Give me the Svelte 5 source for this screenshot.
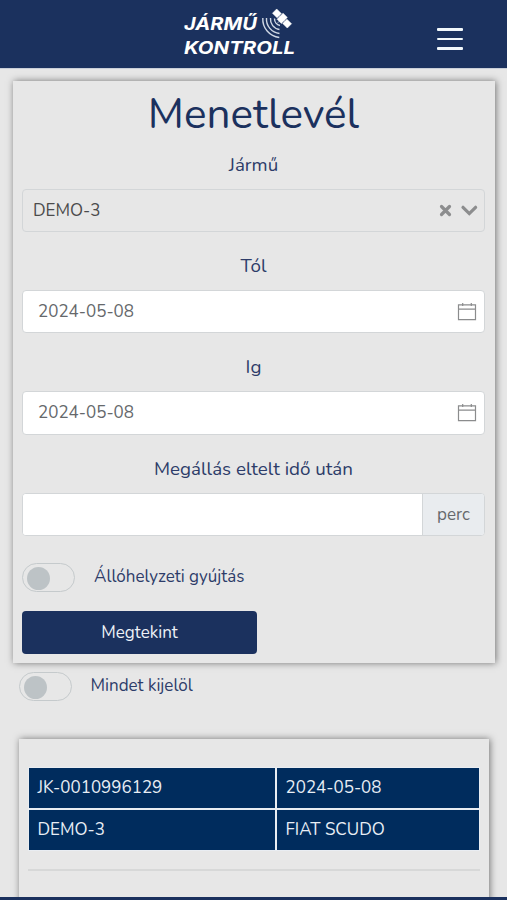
<script>
  let vehicle = $state("DEMO-3");
  let from = $state("2024-05-08");
  let to = $state("2024-05-08");
  let minutes = $state("");
  let ignition = $state(false);
  let selectAll = $state(false);

  const rows = [
    ["JK-0010996129", "2024-05-08"],
    ["DEMO-3", "FIAT SCUDO"],
  ];
</script>

{#snippet calendar()}
  <svg class="calendar" width="20" height="20" viewBox="0 0 20 20">
    <path d="M1.5 2.8h17v14.9h-17zM1.5 7.2h17M5.7 0.9v3M14.3 0.9v3" />
  </svg>
{/snippet}

<div class="page">
  <header>
    <svg class="logo" width="114" height="50" viewBox="0 0 114 50">
      <g class="logo-text">
        <text x="1" y="23" textLength="73" lengthAdjust="spacingAndGlyphs">JÁRMŰ</text>
        <text x="1" y="46.5" textLength="111" lengthAdjust="spacingAndGlyphs">KONTROLL</text>
      </g>
      <g class="waves">
        <path d="M91.5 11.5a7 7 0 0 0 5.5 7" />
        <path d="M87.5 11a10.5 10.5 0 0 0 9 11.5" />
        <path d="M83.5 11a14.5 14.5 0 0 0 13 15.5" />
        <path d="M79.8 11a18.5 18.5 0 0 0 16.5 19.5" />
      </g>
      <g class="satellite" transform="translate(99 11.5) rotate(45)">
        <rect x="-10.5" y="-3" width="6.5" height="6" />
        <rect x="-3" y="-4.5" width="6" height="8.5" />
        <rect x="4" y="-3" width="6.5" height="6" />
        <path d="M-5 0h10M0 3v4" />
      </g>
    </svg>
    <button class="menu" aria-label="Menü">
      <span></span>
      <span></span>
      <span></span>
    </button>
  </header>

  <main>
    <section class="card form">
      <h1>Menetlevél</h1>

      <div class="label vehicle-label">Jármű</div>
      <div class="field select">
        <span class="value">{vehicle}</span>
        <svg class="select-icons" width="40" height="14" viewBox="0 0 40 14">
          <path d="M2.5 3.5l8 8M10.5 3.5l-8 8" />
          <path d="M24 4.3l6.300 6.300l6.300-6.300" />
        </svg>
      </div>

      <div class="label">Tól</div>
      <div class="field date">
        <span class="value">{from}</span>
        {@render calendar()}
      </div>

      <div class="label">Ig</div>
      <div class="field date">
        <span class="value">{to}</span>
        {@render calendar()}
      </div>

      <div class="label">Megállás eltelt idő után</div>
      <div class="field group">
        <input type="text" bind:value={minutes} aria-label="Megállás eltelt idő után" />
        <span class="unit">perc</span>
      </div>

      <label class="switch">
        <input type="checkbox" bind:checked={ignition} />
        <span class="track"></span>
        <span class="switch-text">Állóhelyzeti gyújtás</span>
      </label>

      <button class="submit">Megtekint</button>
    </section>

    <label class="switch all">
      <input type="checkbox" bind:checked={selectAll} />
      <span class="track"></span>
      <span class="switch-text">Mindet kijelöl</span>
    </label>

    <section class="card result">
      <div class="table">
        {#each rows as row}
          {#each row as cell}
            <div class="cell">{cell}</div>
          {/each}
        {/each}
      </div>
      <hr />
    </section>
  </main>

  <footer></footer>
</div>

<style>
  :global(body) {
    margin: 0;
    background: #e7e7e7;
  }

  .page {
    display: flex;
    flex-direction: column;
    height: 900px;
    overflow: hidden;
    font-family: Nunito, Lato, "Open Sans", sans-serif;
    font-size: 17px;
    color: #2d3c69;
  }

  header {
    display: flex;
    flex: none;
    height: 68px;
    justify-content: flex-end;
    align-items: center;
    background: #1b315e;
    border-bottom: 1px solid #c9ced8;
  }

  .logo {
    margin: 0 140px 4px 0;
  }

  .logo-text {
    fill: #fff;
    font-family: Inter, "Liberation Sans", sans-serif;
    font-size: 17.5px;
    font-weight: 700;
    font-style: italic;
  }

  .waves path {
    fill: none;
    stroke: #cfd7e4;
    stroke-width: 1.4;
  }

  .satellite {
    fill: #fff;
    stroke: #fff;
    stroke-width: 0.5;
  }

  .menu {
    display: flex;
    flex-direction: column;
    gap: 7px;
    width: 26px;
    margin: 10px 44px 0 0;
    padding: 0;
    border: 0;
    background: none;
  }

  .menu span {
    height: 2.4px;
    border-radius: 1px;
    background: #f2f8fb;
  }

  main {
    flex: 1;
    min-height: 0;
    overflow: hidden;
    padding: 12px 12px 0 13px;
  }

  .card {
    background: #e7e7e7;
    box-shadow: 1px 0 7px 0 rgba(0, 0, 0, 0.5);
  }

  .form {
    height: 582px;
    padding: 0 10px 0 9px;
    box-sizing: border-box;
  }

  h1 {
    height: 66px;
    margin: 0;
    font-size: 42.3px;
    font-weight: 400;
    line-height: 67px;
    text-align: center;
    color: #1b315e;
  }

  .label {
    height: 58px;
    padding-top: 8px;
    box-sizing: border-box;
    font-size: 18.8px;
    line-height: 53px;
    text-align: center;
  }

  .vehicle-label {
    height: 42px;
    padding: 0;
    line-height: 36px;
  }

  .field {
    display: flex;
    align-items: center;
    height: 43.2px;
    box-sizing: border-box;
    border: 1px solid #d3d6d8;
    border-radius: 4px;
    background: #fff;
    color: #65686b;
  }

  .select {
    justify-content: space-between;
    padding: 0 5px 1px 10px;
    background: #e7e7e7;
    color: #4b4b4c;
  }

  .select-icons {
    fill: none;
    stroke: #8c8d8e;
    stroke-width: 3.2;
    stroke-linecap: round;
  }

  .date {
    justify-content: space-between;
    padding: 0 7px 0 15px;
  }

  .calendar {
    fill: none;
    stroke: #8b8c8d;
    stroke-width: 1.2;
  }

  .group {
    align-items: stretch;
    overflow: hidden;
  }

  .group input {
    flex: 1;
    min-width: 0;
    padding: 0 15px;
    border: 0;
    font: inherit;
  }

  .unit {
    display: flex;
    align-items: center;
    justify-content: center;
    width: 61px;
    border-left: 1px solid #d3d6d8;
    background: #e9ecef;
  }

  .switch {
    display: flex;
    align-items: center;
    height: 29px;
    margin-top: 27.4px;
  }

  .switch input {
    position: absolute;
    opacity: 0;
  }

  .track {
    display: flex;
    align-items: center;
    width: 53px;
    height: 29px;
    padding: 1px 0 0 4px;
    box-sizing: border-box;
    border: 1px solid #c5cacc;
    border-radius: 15px;
  }

  .track::before {
    content: "";
    width: 23px;
    height: 23px;
    border-radius: 50%;
    background: #bdc3c6;
  }

  .switch input:checked + .track {
    justify-content: flex-end;
    padding: 1px 4px 0 0;
  }

  .switch-text {
    margin-left: 19px;
    padding-bottom: 3px;
  }

  .submit {
    display: block;
    width: 235px;
    height: 43px;
    margin-top: 19px;
    padding: 0;
    border: 0;
    border-radius: 4px;
    background: #1b315e;
    color: #edf1f7;
    font: inherit;
  }

  .all {
    margin: 9px 0 0 5.5px;
  }

  .result {
    height: 180px;
    margin: 38px 6px 0;
    padding: 28px 9px 0;
    box-sizing: border-box;
  }

  .table {
    display: grid;
    grid-template-columns: 246px 1fr;
    grid-auto-rows: 40px;
    gap: 2px;
    padding: 1px;
    background: #e9edf2;
  }

  .cell {
    padding-left: 8.5px;
    background: #002c5d;
    color: #e8eef5;
    line-height: 40px;
  }

  hr {
    height: 2px;
    margin: 18px 0 0;
    border: 0;
    background: #d7d8d8;
  }

  footer {
    flex: none;
    height: 3px;
    background: #1b315e;
  }
</style>
